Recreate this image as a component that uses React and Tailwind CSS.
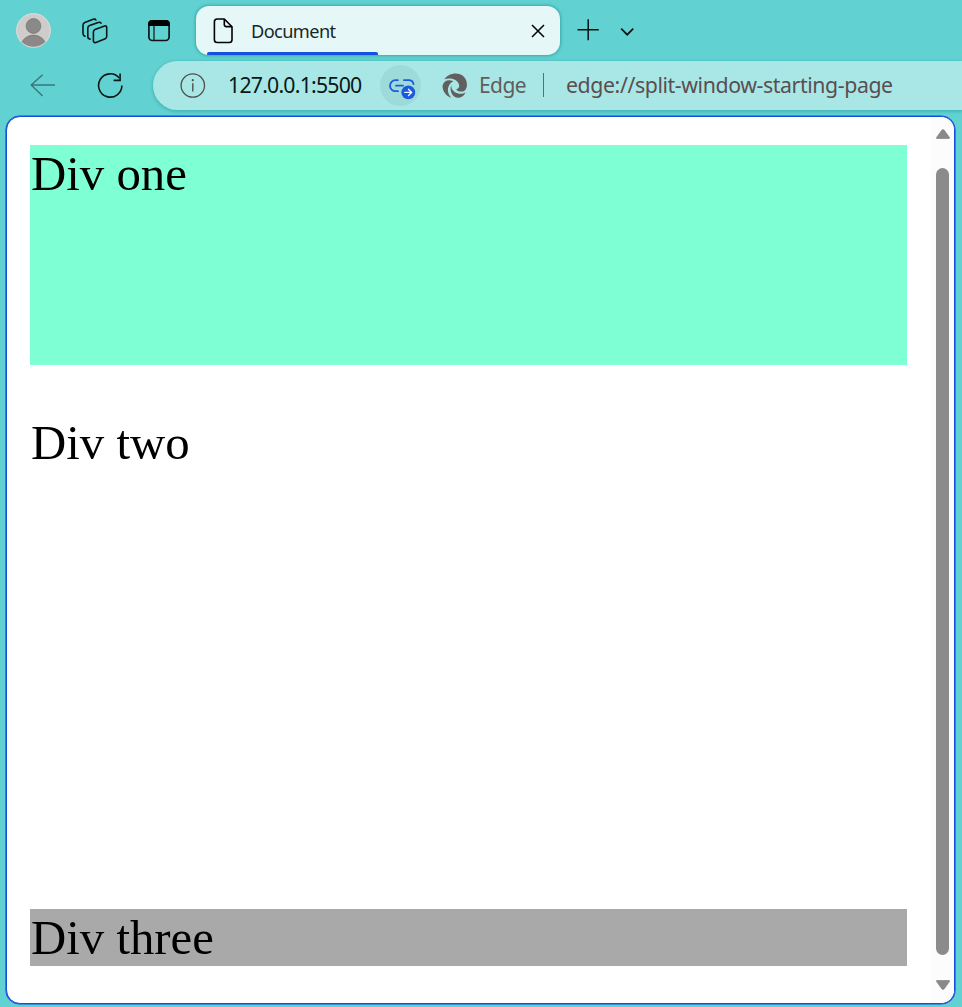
import React from "react";

function Avatar() {
  return (
    <svg width="36" height="36" viewBox="0 0 36 36" className="ml-[15px] mt-3 shrink-0">
      <defs>
        <clipPath id="avatar-circle"><circle cx="18.5" cy="18.5" r="17" /></clipPath>
      </defs>
      <circle cx="18.5" cy="18.5" r="17.2" fill="#cfcdcb" />
      <g clipPath="url(#avatar-circle)" fill="#8b8987" stroke="#777573" strokeWidth=".7">
        <circle cx="18.5" cy="14" r="7.4" />
        <ellipse cx="18.5" cy="35.5" rx="13" ry="12.4" />
      </g>
      <circle cx="18.5" cy="18.5" r="16.8" fill="none" stroke="#dedcda" strokeWidth="1" />
    </svg>
  );
}

function Workspaces() {
  return (
    <svg width="28" height="28" viewBox="0 0 28 28" fill="none" stroke="#0b1717" strokeWidth="1.6" strokeLinejoin="round" strokeLinecap="round" className="ml-[30px] mt-[17px] shrink-0">
      <path d="M14 12.4 23.6 9Q25.7 8.4 25.7 10.6V19.6Q25.7 21.2 24.2 21.8L15 25.4Q12.4 26.2 12.4 23.8V15Q12.4 13 14 12.4Z" />
      <path d="M9.1 22.1Q6.8 22 6.8 19.6V11.2Q6.8 9.2 8.6 8.5L17.2 5.4Q19.2 4.8 20 6.2" />
      <path d="M4 19.2Q2 18.6 2 16.6V8.2Q2 6.2 3.8 5.5L12.2 2.3Q14.2 1.6 14.9 3" />
    </svg>
  );
}

function VerticalTabs() {
  return (
    <svg width="24" height="24" viewBox="0 0 24 24" className="ml-[38px] mt-[19px] shrink-0">
      <rect x="1.9" y="1.9" width="20.2" height="19.6" rx="3.4" fill="none" stroke="#0b1717" strokeWidth="1.7" />
      <path d="M1.2 7V4.8Q1.2 1.1 4.8 1.1H19.2Q22.8 1.1 22.8 4.8V7Z" fill="#000" />
      <path d="M7 7V21.5" stroke="#0b1717" strokeWidth="1.2" />
    </svg>
  );
}

function Tab() {
  return (
    <div className="ml-[25px] mt-[6px] flex h-[49px] w-[364px] shrink-0 flex-col overflow-hidden rounded-[13px] bg-[#e5f8f7] shadow-[0_0_3px_1px_rgba(20,130,135,0.5)]">
      <div className="flex h-[46px] shrink-0">
        <svg width="20" height="26" viewBox="0 0 20 26" fill="none" stroke="#000" strokeWidth="1.6" strokeLinejoin="round" className="ml-[17px] mt-3 shrink-0">
          <path d="M4.2 1H11.3L19 8.7V21.7Q19 24.5 16.2 24.5H4.2Q1.4 24.5 1.4 21.7V3.8Q1.4 1 4.2 1Z" />
          <path d="M11.3 1V6.6Q11.3 8.6 13.3 8.6H19" />
        </svg>
        <span className="ml-[18px] mt-[12px] w-[110px] whitespace-nowrap text-[18.2px] leading-[26px] tracking-[-0.6px] text-[#192727]">Document</span>
        <svg width="14" height="14" viewBox="0 0 14 14" stroke="#000" strokeWidth="1.5" className="ml-auto mr-[15px] mt-[18px] shrink-0">
          <path d="M1 1 13 13M13 1 1 13" />
        </svg>
      </div>
      <div className="ml-[11px] h-[3px] w-[171px] shrink-0 rounded-t-[2px] bg-[#1551df]" />
    </div>
  );
}

function TabStrip() {
  return (
    <div className="flex h-[61px] shrink-0 items-start">
      <Avatar />
      <Workspaces />
      <VerticalTabs />
      <Tab />
      <svg width="22" height="22" viewBox="0 0 22 22" stroke="#0a1414" strokeWidth="1.5" className="ml-[17px] mt-[19px] shrink-0">
        <path d="M.5 10.7H21.8M11.2 .3V21.3" />
      </svg>
      <svg width="14" height="9" viewBox="0 0 14 9" fill="none" stroke="#0a1414" strokeWidth="1.7" className="ml-[21px] mt-[27px] shrink-0">
        <path d="M1.2 1.7 7.2 7.7 13.2 1.7" />
      </svg>
    </div>
  );
}

function LinkButton() {
  return (
    <div className="ml-[18px] mt-[4px] flex h-[41px] w-[41px] shrink-0 items-start rounded-full bg-[#9fdada]">
      <svg width="28" height="22" viewBox="0 0 28 22" fill="none" stroke="#1d59df" strokeWidth="1.8" strokeLinecap="round" className="ml-[9px] mt-[14px] shrink-0">
        <path d="M8.8 1.2H6.5A5.5 5.5 0 0 0 6.5 12.2H9" />
        <path d="M15 1.2H19.8Q23.6 1.2 24.5 5" />
        <path d="M7 6.7H14" />
        <circle cx="19.3" cy="13.4" r="6.9" fill="#1d59df" stroke="none" />
        <path d="M15.8 13.4H22.3M19.5 10.3 22.6 13.4 19.5 16.5" stroke="#e7f8ff" strokeWidth="1.4" />
      </svg>
    </div>
  );
}

function EdgeLogo() {
  return (
    <svg width="26" height="26" viewBox="0 0 26 26" className="ml-[21px] mt-[12px] shrink-0" fill="#625f5f">
      <path d="M2.4 6.2C5.5 1.5 12.2-.7 17.4 1C22.3 2.5 25.2 7.1 24.9 12.4C24.7 15.6 22.9 18.2 20.2 18.5C17.5 18.8 14.8 17.6 14.2 16.4C17 15.8 17.8 13.1 16.7 10.7C14.8 6.3 8.5 4.5 2.4 6.2Z" />
      <path d="M11.4 8.3C7 5.9 1.7 7.6.6 12.5C0 17.4 3.8 23.1 9.5 25C6.6 22 5.1 17.7 6.3 14.2C7.2 11.4 9 9.2 11.4 8.3Z" />
      <path d="M9.2 12.1C7.4 18.1 10.1 24.1 15.4 24.8C19.3 25.2 22.2 22.7 23.5 19.3C20.5 21.6 15.7 21.1 12.6 19C10.2 17.3 9.1 15 9.2 12.1Z" />
    </svg>
  );
}

function AddressBar() {
  return (
    <div className="ml-[30px] flex h-[49px] min-w-0 grow items-start overflow-hidden rounded-l-full bg-[#a8e7e5] shadow-[0_1px_3px_1px_rgba(25,145,150,0.38)]">
      <svg width="26" height="26" viewBox="0 0 26 26" fill="none" stroke="#514e4e" className="ml-[27px] mt-[12px] shrink-0">
        <circle cx="12.8" cy="12.5" r="11.7" strokeWidth="1.3" />
        <path d="M12.8 10.3V18.5" strokeWidth="1.4" />
        <circle cx="12.8" cy="7.2" r="1.1" fill="#514e4e" stroke="none" />
      </svg>
      <span className="ml-[22px] mt-[8px] w-[134px] shrink-0 whitespace-nowrap text-[21.3px] leading-[32px] tracking-[-0.8px] text-[#0b1717]">127.0.0.1:5500</span>
      <LinkButton />
      <EdgeLogo />
      <span className="ml-[11px] mt-[8px] w-[49px] shrink-0 whitespace-nowrap text-[21px] leading-[32px] tracking-[-0.6px] text-[#625d5d]">Edge</span>
      <div className="ml-[15px] mt-[12px] h-[24px] w-px shrink-0 bg-[#507274]" />
      <span className="ml-[22px] mt-[8px] whitespace-nowrap text-[21.3px] leading-[32px] tracking-[-0.41px] text-[#5a4e50]">edge://split-window-starting-page</span>
    </div>
  );
}

function Toolbar() {
  return (
    <div className="flex h-[55px] shrink-0 items-start">
      <svg width="26" height="23" viewBox="0 0 26 23" fill="none" stroke="#397779" strokeWidth="1.4" className="ml-[30px] mt-[13px] shrink-0">
        <path d="M25 11H1.2M12.6 .8 1.2 11 12.6 21.9" />
      </svg>
      <svg width="26" height="27" viewBox="0 0 26 27" fill="none" stroke="#0b1717" strokeWidth="1.6" className="ml-[41px] mt-[11px] shrink-0">
        <path d="M24.9 13.4A11.65 11.65 0 1 1 22.2 6" />
        <path d="M23.1 1.6V8.4H16.6" />
      </svg>
      <AddressBar />
    </div>
  );
}

function Scrollbar() {
  return (
    <div className="flex w-[24px] shrink-0 flex-col items-center bg-[#fcfcfc]">
      <svg width="15" height="10" viewBox="-1 0 15 10" className="mt-[12px] shrink-0" fill="#898989" stroke="#7b7b7b" strokeWidth=".5">
        <path d="M.5 8.4 5.8 1.1Q7 0 8.2 1.1L13.5 8.4Q13.9 9.7 12.7 9.7H1.3Q.1 9.7 .5 8.4Z" />
      </svg>
      <div className="mt-[29px] h-[787px] w-[13px] shrink-0 rounded-full bg-[#8b8b8b]" />
      <svg width="15" height="10" viewBox="-1 0 15 10" className="mt-[25px] shrink-0" fill="#898989" stroke="#7b7b7b" strokeWidth=".5">
        <path d="M.5 1.6 5.8 8.9Q7 10 8.2 8.9L13.5 1.6Q13.9 .3 12.7 .3H1.3Q.1 .3 .5 1.6Z" />
      </svg>
    </div>
  );
}

export default function App() {
  return (
    <div className="flex h-[1007px] w-[962px] flex-col overflow-hidden bg-[#62d1d1] font-['Noto_Sans',sans-serif]">
      <TabStrip />
      <Toolbar />
      <div className="ml-[6px] flex h-[888px] w-[949px] shrink-0 overflow-hidden rounded-[14px] border border-[#134fda] bg-white shadow-[0_0_0_0.6px_#134fda]">
        <main className="flex grow flex-col pl-[23px] pt-[28px] font-['Liberation_Serif',serif] text-[48.8px] leading-[59px] text-black">
          <div className="h-[220px] w-[877px] shrink-0 bg-[#7fffd4] pl-px">Div one</div>
          <div className="mt-[49px] h-[446px] w-[877px] shrink-0 pl-px">Div two</div>
          <div className="mt-[49px] h-[57px] w-[877px] shrink-0 bg-[#a9a9a9] pl-px">Div three</div>
        </main>
        <Scrollbar />
      </div>
    </div>
  );
}
